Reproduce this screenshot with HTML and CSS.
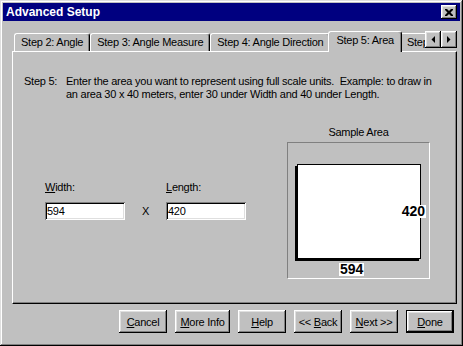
FILE: index.html
```html
<!DOCTYPE html>
<html lang="en">
<head>
    <meta charset="UTF-8">
    <title>Advanced Setup</title>
    <link rel="stylesheet" href="styles.css">
</head>
<body>
    <div class="window">
        <div class="titlebar">
            <span class="title">Advanced Setup</span>
            <button class="close-btn" title="Close">
                <svg width="8" height="7" viewBox="0 0 8 7">
                    <path d="M0 0h2l2 2 2-2h2v1l-2.5 2.5 2.5 2.5v1h-2l-2-2-2 2h-2v-1l2.5-2.5-2.5-2.5z" fill="#000"/>
                </svg>
            </button>
        </div>

        <div class="tabs">
            <div class="tab-strip">
                <div class="tab-list">
                    <div class="tab">Step 2: Angle</div>
                    <div class="tab">Step 3: Angle Measure</div>
                    <div class="tab">Step 4: Angle Direction</div>
                    <div class="tab active">Step 5: Area</div>
                    <div class="tab">Step 6: Scale</div>
                </div>
                <div class="tab-scroll">
                    <button class="scroll-btn">
                        <svg width="4" height="7" viewBox="0 0 4 7"><path d="M4 0v7L0.5 3.5z" fill="#000"/></svg>
                    </button>
                    <button class="scroll-btn">
                        <svg width="4" height="7" viewBox="0 0 4 7"><path d="M0 0v7l3.5-3.5z" fill="#000"/></svg>
                    </button>
                </div>
            </div>

            <div class="panel">
                <div class="step">
                    <span class="step-label">Step 5:</span>
                    <p class="step-text">Enter the area you want to represent using full scale units.&nbsp; Example: to draw in<br>an area 30 x 40 meters, enter 30 under Width and 40 under Length.</p>
                </div>

                <div class="area-row">
                    <div class="fields">
                        <div class="field">
                            <label for="width"><u>W</u>idth:</label>
                            <input id="width" value="594">
                        </div>
                        <span class="times">X</span>
                        <div class="field">
                            <label for="length"><u>L</u>ength:</label>
                            <input id="length" value="420">
                        </div>
                    </div>

                    <div class="sample">
                        <div class="sample-title">Sample Area</div>
                        <div class="sample-frame">
                            <div class="sample-rect">
                                <span class="dim dim-length">420</span>
                            </div>
                            <div class="dim dim-width">594</div>
                        </div>
                    </div>
                </div>
            </div>
        </div>

        <div class="actions">
            <button class="btn"><u>C</u>ancel</button>
            <button class="btn wide"><u>M</u>ore Info</button>
            <button class="btn"><u>H</u>elp</button>
            <button class="btn">&lt;&lt; <u>B</u>ack</button>
            <button class="btn"><u>N</u>ext &gt;&gt;</button>
            <button class="btn default"><u>D</u>one</button>
        </div>
    </div>
</body>
</html>
```

FILE: styles.css
```css
:root {
    --face: #c0c0c0;
    --light: #dfdfdf;
    --shadow: #808080;
    --title: #000080;
}

body {
    margin: 0;
    background: var(--face);
    font-family: "Liberation Sans", Arial, sans-serif;
    font-size: 11px;
    letter-spacing: -0.25px;
    color: #000;
}

button,
input {
    font: inherit;
    letter-spacing: inherit;
    color: inherit;
}

.window {
    width: 463px;
    height: 346px;
    box-sizing: border-box;
    padding: 3px;
    background: var(--face);
    box-shadow: inset -1px -1px #000, inset 1px 1px var(--light),
                inset -2px -2px var(--shadow), inset 2px 2px #fff;
}

/* title bar */
.titlebar {
    display: flex;
    align-items: center;
    justify-content: space-between;
    height: 18px;
    padding: 0 3px 0 3px;
    background: var(--title);
    color: #fff;
    font-weight: bold;
    font-size: 12px;
    letter-spacing: 0;
}

.close-btn {
    display: flex;
    align-items: center;
    justify-content: center;
    width: 16px;
    height: 14px;
    padding: 0;
    border: none;
    background: var(--face);
    box-shadow: inset -1px -1px #000, inset 1px 1px #fff,
                inset -2px -2px var(--shadow), inset 2px 2px var(--light);
}

/* tab control */
.tabs {
    width: 445px;
    margin: 10px 0 0 9px;
}

.tab-strip {
    display: flex;
    height: 21px;
    position: relative;
    z-index: 1;
}

.tab-list {
    flex: 1;
    display: flex;
    align-items: flex-start;
    padding-left: 2px;
    overflow: hidden;
}

.tab {
    flex: none;
    box-sizing: border-box;
    height: 18px;
    margin-top: 2px;
    padding: 2px 6px 0;
    line-height: 13px;
    white-space: nowrap;
    border: 1px solid #fff;
    border-right-color: #000;
    border-bottom: none;
    border-radius: 3px 3px 0 0;
    box-shadow: inset -1px 0 var(--shadow);
    background: var(--face);
}

.tab.active {
    position: relative;
    z-index: 1;
    height: 21px;
    margin: 0 -2px;
    padding: 2px 7px 0;
}

.tab-scroll {
    display: flex;
    align-items: flex-start;
}

.scroll-btn {
    display: flex;
    align-items: center;
    justify-content: center;
    width: 16px;
    height: 17px;
    padding: 0;
    border: none;
    background: var(--face);
    box-shadow: inset -1px -1px #000, inset 1px 1px #fff,
                inset -2px -2px var(--shadow), inset 2px 2px var(--light);
}

.panel {
    height: 253px;
    box-sizing: border-box;
    margin-top: -1px;
    padding: 23px 0 0 11px;
    border: 1px solid #fff;
    border-right-color: #000;
    border-bottom-color: #000;
    box-shadow: inset -1px -1px var(--shadow);
}

.step {
    display: flex;
    line-height: 13px;
}

.step-label {
    flex: none;
    width: 42px;
}

.step-text {
    margin: 0;
    white-space: nowrap;
}

.area-row {
    display: flex;
    margin-top: 25px;
}

.fields {
    display: flex;
    align-self: flex-start;
    margin: 55px 0 0 21px;
}

.field label {
    display: block;
    line-height: 13px;
    margin-bottom: 8px;
}

.field input {
    display: block;
    width: 80px;
    height: 18px;
    box-sizing: border-box;
    padding: 0 2px;
    border: none;
    outline: none;
    background: #fff;
    box-shadow: inset 1px 1px var(--shadow), inset -1px -1px #fff,
                inset 2px 2px #000, inset -2px -2px var(--light);
}

.times {
    align-self: flex-end;
    width: 41px;
    margin-bottom: 2px;
    line-height: 13px;
    text-align: center;
}

/* sample preview */
.sample {
    width: 143px;
    margin: 0 26px 0 auto;
}

.sample-title {
    line-height: 13px;
    text-align: center;
}

.sample-frame {
    height: 137px;
    box-sizing: border-box;
    margin-top: 3px;
    padding: 21px 0 0 9px;
    border: 1px solid var(--shadow);
    border-right-color: #fff;
    border-bottom-color: #fff;
}

.sample-rect {
    position: relative;
    width: 124px;
    height: 95px;
    box-sizing: border-box;
    border: 1px solid #000;
    background: #fff;
    box-shadow: -2px 2px 0 #000;
}

.dim {
    padding: 0 1px;
    background: #fff;
    font-size: 14px;
    font-weight: bold;
    line-height: 13px;
    letter-spacing: 0;
}

.dim-length {
    position: absolute;
    right: -6px;
    top: 40px;
}

.dim-width {
    display: inline-block;
    margin: 4px 0 0 42px;
}

/* bottom buttons */
.actions {
    display: flex;
    justify-content: flex-end;
    gap: 8px;
    margin-top: 6px;
    padding-right: 6px;
}

.btn {
    width: 48px;
    height: 23px;
    box-sizing: border-box;
    padding: 0;
    border: none;
    background: var(--face);
    white-space: nowrap;
    box-shadow: inset -1px -1px #000, inset 1px 1px #fff,
                inset -2px -2px var(--shadow), inset 2px 2px var(--light);
}

.btn.wide {
    width: 55px;
}

.btn.default {
    border: 1px solid #000;
}
```
